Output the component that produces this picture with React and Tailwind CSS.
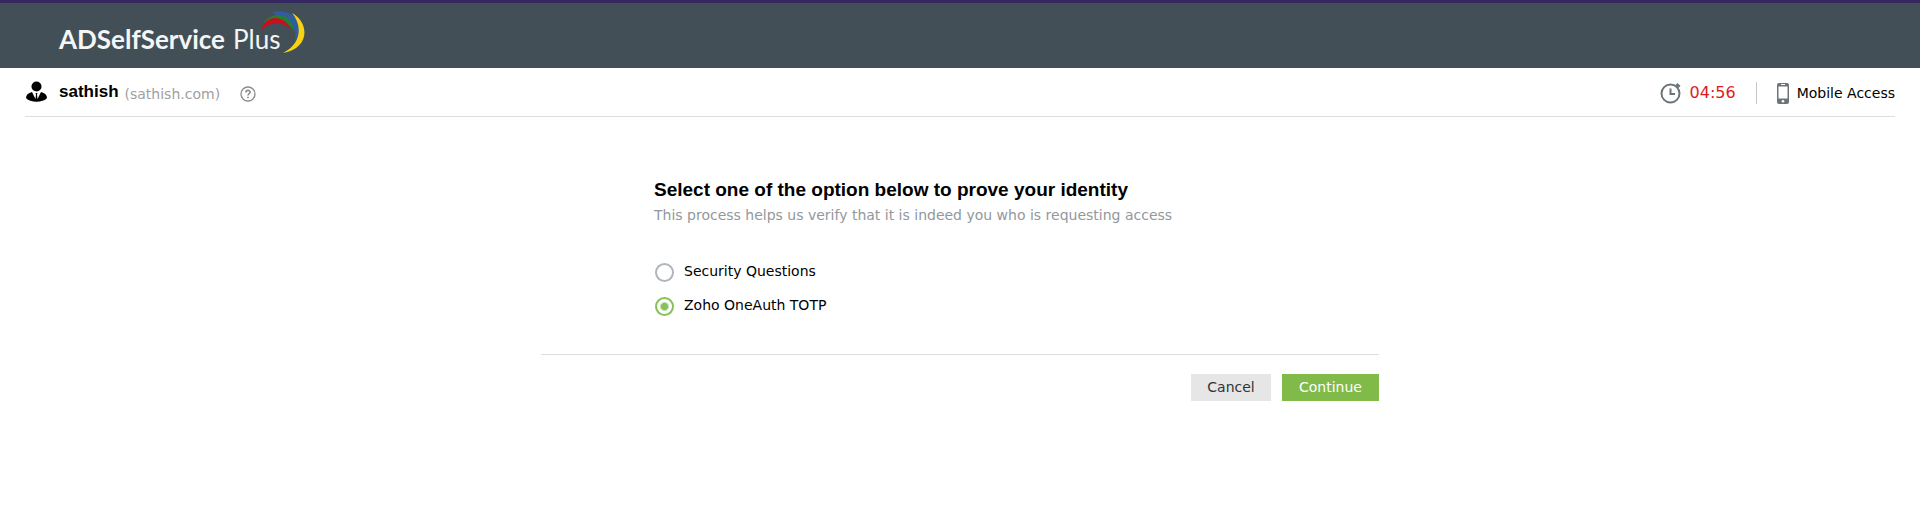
import { useState } from "react";

const options = [
  { id: "security-questions", label: "Security Questions" },
  { id: "zoho-totp", label: "Zoho OneAuth TOTP" },
];

const Logo = () => (
  <a href="#" className="flex items-center font-['Lato',sans-serif] text-[26px] text-[#f4f5f5]">
    <span className="font-bold">ADSelfService</span>
    <span className="ml-2">Plus</span>
    <svg width="44" height="42" viewBox="0 0 44 42" className="-ml-[19px] mb-4" aria-hidden="true">
      <path d="M12 1C28-3 47 9 34 30C37 15 27 5 12 3Z" fill="#2f5da3" />
      <path d="M2 12C12-1 32 2 33 20C26 9 15 7 2 12Z" fill="#2a7c35" />
      <path d="M0 20C3 4 22 2 30 18C21 11 8 10 0 20Z" fill="#c70f1f" />
      <path d="M31 2C48 11 50 37 22 42C40 33 42 15 31 2Z" fill="#f7d313" />
    </svg>
  </a>
);

const UserIcon = () => (
  <svg width="22" height="22" viewBox="0 0 22 22" aria-hidden="true">
    <circle cx="11.5" cy="5.5" r="5" fill="#000" />
    <path d="M7 11L10.5 18L11 13.5L10.5 12H12.5L12 13.5L12.5 18L16 11C20 12 22 14 22 17C18 22 5 22 1 17C1 14 3 12 7 11Z" fill="#000" />
  </svg>
);

const ClockIcon = () => (
  <svg width="22" height="22" viewBox="0 0 22 22" fill="none" stroke="#69757b" aria-hidden="true">
    <circle cx="10.5" cy="11.5" r="9" strokeWidth="2" />
    <path d="M10.5 6.5V12H15" strokeWidth="2" />
    <path d="M16.5 2L19.5 5" strokeWidth="3" />
  </svg>
);

const PhoneIcon = () => (
  <svg width="12" height="21" viewBox="0 0 12 21" aria-hidden="true">
    <rect width="12" height="21" rx="2" fill="#69757b" />
    <rect x="1.5" y="3.5" width="9" height="12" fill="#fff" />
    <path d="M4 1.5H8" stroke="#fff" />
    <circle cx="6" cy="18.2" r="1.3" fill="#fff" />
  </svg>
);

const App = () => {
  const [selected, setSelected] = useState("zoho-totp");

  return (
    <div className="bg-white font-[Verdana,'DejaVu_Sans',sans-serif] text-sm text-black">
      <header className="flex h-17 items-center border-t-3 border-[#35275f] bg-[#434f56] px-[59px] pt-2">
        <Logo />
      </header>

      <div className="mx-[25px] flex h-[49px] items-center justify-between border-b border-[#dedede]">
        <div className="flex items-center">
          <UserIcon />
          <span className="ml-3 font-['Liberation_Sans',sans-serif] text-[17px] font-bold">
            sathish
          </span>
          <span className="ml-1.5 pt-1 text-[#a0a0a0]">(sathish.com)</span>
          <button type="button" aria-label="Help" className="ml-5 pt-1">
            <svg width="16" height="16" viewBox="0 0 16 16" fill="none" stroke="#8c8c8c" aria-hidden="true">
              <circle cx="8" cy="8" r="7" strokeWidth="1.3" />
              <path d="M5.8 6.5C5.8 3.7 10.3 3.8 10.2 6.3C10.1 7.8 8 7.7 8 9.5M8 10.7V12.2" strokeWidth="1.6" />
            </svg>
          </button>
        </div>
        <div className="flex items-center pt-0.5">
          <ClockIcon />
          <span className="ml-2 text-base text-[#e01b1b]">04:56</span>
          <span className="mx-5 h-[22px] border-l border-[#c8c8c8]" />
          <a href="#" className="flex items-center gap-2">
            <PhoneIcon />
            Mobile Access
          </a>
        </div>
      </div>

      <main className="mx-auto w-full max-w-[838px] pt-[59px]">
        <form onSubmit={(e) => e.preventDefault()}>
          <div className="px-[113px] pb-[38px]">
            <h1 className="mb-px font-['Liberation_Sans',sans-serif] text-[19px] leading-7 font-bold">
              Select one of the option below to prove your identity
            </h1>
            <p className="text-[#92989c]">
              This process helps us verify that it is indeed you who is requesting access
            </p>
            <div className="mt-9 flex flex-col gap-[13px]">
              {options.map((option) => (
                <label key={option.id} htmlFor={option.id} className="flex items-start gap-2.5">
                  <input
                    id={option.id}
                    type="radio"
                    name="method"
                    checked={selected === option.id}
                    onChange={() => setSelected(option.id)}
                    className="mt-0.5 ml-px size-[19px] appearance-none rounded-full border-2 border-[#b0b5b9] bg-white checked:border-[#86c058] checked:bg-[radial-gradient(circle,#86c058_3px,white_5px)]"
                  />
                  {option.label}
                </label>
              ))}
            </div>
          </div>
          <div className="flex justify-end gap-[11px] border-t border-[#dedede] pt-[19px]">
            <button type="button" className="h-[27px] w-20 bg-[#e6e6e6] pb-0.5 text-[#333]">
              Cancel
            </button>
            <button type="submit" className="h-[27px] w-[97px] bg-[#80bb49] pb-0.5 text-white">
              Continue
            </button>
          </div>
        </form>
      </main>
    </div>
  );
};

export default App;
